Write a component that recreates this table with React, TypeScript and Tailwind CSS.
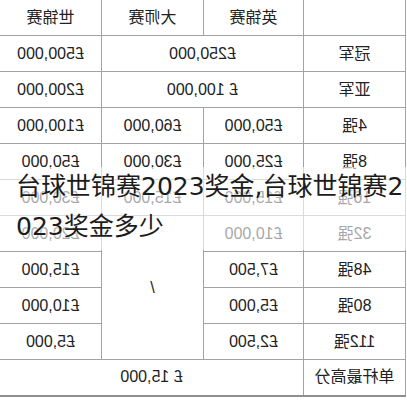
type Cell = { text: string; colSpan?: number; rowSpan?: number };

// columns in source order: label | 英锦赛 | 大师赛 | 世锦赛 (the picture shows it mirrored)
const rows: Cell[][] = [
  [{ text: "" }, { text: "英锦赛" }, { text: "大师赛" }, { text: "世锦赛" }],
  [{ text: "冠军" }, { text: "£250,000", colSpan: 2 }, { text: "£500,000" }],
  [{ text: "亚军" }, { text: "£ 100,000", colSpan: 2 }, { text: "£200,000" }],
  [{ text: "4强" }, { text: "£50,000" }, { text: "£60,000" }, { text: "£100,000" }],
  [{ text: "8强" }, { text: "£25,000" }, { text: "£30,000" }, { text: "£50,000" }],
  [{ text: "16强" }, { text: "£15,000" }, { text: "£15,000" }, { text: "£30,000" }],
  [{ text: "32强" }, { text: "£10,000" }, { text: "/", rowSpan: 4 }, { text: "£20,000" }],
  [{ text: "48强" }, { text: "£7,500" }, { text: "£15,000" }],
  [{ text: "80强" }, { text: "£5,000" }, { text: "£10,000" }],
  [{ text: "112强" }, { text: "£2,500" }, { text: "£5,000" }],
  [{ text: "单杆最高分" }, { text: "£ 15,000", colSpan: 3 }],
];

export default function App() {
  return (
    <div className="relative w-[407px] h-[400px] overflow-hidden bg-white">
      <div className="-scale-x-100 w-[406px] -mt-px">
        <table className="w-[406px] table-fixed border-collapse border-b-2 border-[#8f8f8f] text-[16px] text-[#222] font-['Liberation_Sans','Noto_Sans_CJK_SC',sans-serif]">
          <colgroup>
            <col className="w-[102px]" />
            <col className="w-[100px]" />
            <col className="w-[102px]" />
            <col className="w-[102px]" />
          </colgroup>
          <tbody>
            {rows.map((row, i) => (
              <tr key={i} className="h-[36px]">
                {row.map((c, j) => (
                  <td
                    key={j}
                    colSpan={c.colSpan}
                    rowSpan={c.rowSpan}
                    className="border border-[#a3a3a3] text-center align-middle p-0"
                  >
                    {c.text}
                  </td>
                ))}
              </tr>
            ))}
          </tbody>
        </table>
      </div>

      <div className="absolute top-[167px] left-0 w-[407px] bg-white/60 pl-[16px] pb-[3px] break-all text-[25px] leading-[40px] text-[#1c1c1c] font-['DejaVu_Sans','Noto_Sans_CJK_SC',sans-serif] [text-shadow:0_0_3px_#fff]">
        台球世锦赛2023奖金,台球世锦赛2023奖金多少
      </div>
    </div>
  );
}
